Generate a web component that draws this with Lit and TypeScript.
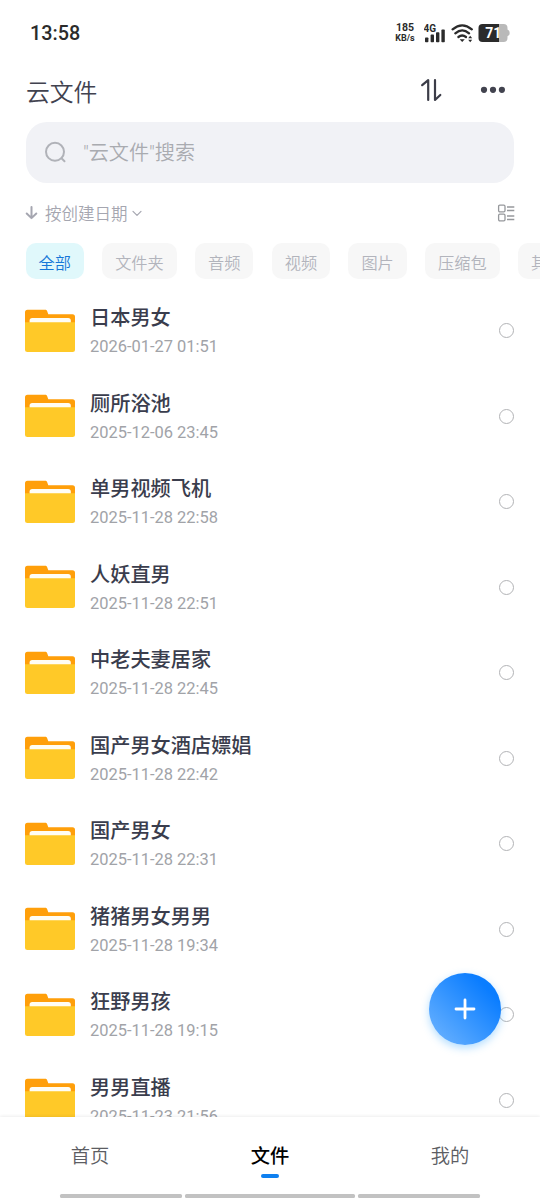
import { LitElement, html, css } from "lit";
import { customElement, property } from "lit/decorators.js";
import { classMap } from "lit/directives/class-map.js";

const FILES: [string, string][] = [
  ["日本男女", "2026-01-27 01:51"],
  ["厕所浴池", "2025-12-06 23:45"],
  ["单男视频飞机", "2025-11-28 22:58"],
  ["人妖直男", "2025-11-28 22:51"],
  ["中老夫妻居家", "2025-11-28 22:45"],
  ["国产男女酒店嫖娼", "2025-11-28 22:42"],
  ["国产男女", "2025-11-28 22:31"],
  ["猪猪男女男男", "2025-11-28 19:34"],
  ["狂野男孩", "2025-11-28 19:15"],
  ["男男直播", "2025-11-23 21:56"],
];

const FILTERS = ["全部", "文件夹", "音频", "视频", "图片", "压缩包", "其他"];

@customElement("status-bar")
class StatusBar extends LitElement {
  static styles = css`
    :host {
      display: flex;
      align-items: center;
      height: 66px;
      box-sizing: border-box;
      padding: 0 29px 0 30px;
      color: #2b2b2b;
      font-family: Roboto, sans-serif;
    }
    .time { flex: 1; font-size: 19.8px; font-weight: 550; line-height: 24px; padding-top: 2px; }
    .speed {
      width: 22px;
      text-align: center;
      font-size: 10.5px;
      line-height: 10px;
      font-weight: 700;
      margin-right: 8px;
    }
    .unit { font-size: 9px; }
    svg { display: block; }
  `;
  render() {
    return html`
      <span class="time">13:58</span>
      <div class="speed">185<div class="unit">KB/s</div></div>
      <svg width="87" height="24" viewBox="0 0 87 24" fill="#2b2b2b">
        <text x="-0.5" y="10.6" font-size="10" font-weight="700" font-family="Roboto, sans-serif">4G</text>
        <rect x="1" y="16.4" width="3.4" height="4.8" rx="0.8" />
        <rect x="6.6" y="13.6" width="3.4" height="7.6" rx="0.8" />
        <rect x="12" y="11.2" width="3.4" height="10" rx="0.8" />
        <rect x="17.4" y="8.6" width="3.4" height="12.6" rx="0.8" />
        <g fill="none" stroke="#2b2b2b" stroke-width="2.3" stroke-linecap="round">
          <path d="M28.6 8.3 Q38.2 0.4 47.8 8.3" />
          <path d="M31.3 12.3 Q38.2 6.4 45.1 12.3" />
          <path d="M34.4 16 Q38.2 13 42 16" />
        </g>
        <path d="M35.6 18.3h5.2L38.2 21.1z" />
        <path d="M44.2 17.3l2-2.5 2 2.5zM44.2 18.7h4l-2 2.5z" />
        <path d="M58.5 2.9H75V21H58.5a4 4 0 0 1-4-4V6.900a4 4 0 0 1 4-4z" />
        <path d="M75 2.900h4.500a4 4 0 0 1 4 4v1.600q2.200.6 2.200 3.400t-2.200 3.400v1.700a4 4 0 0 1-4 4H75z" fill="#b9b9b9" />
        <text x="61.200" y="17" font-size="14" font-weight="700" fill="#fff" font-family="Roboto, sans-serif">71</text>
      </svg>
    `;
  }
}

@customElement("file-row")
class FileRow extends LitElement {
  @property() name = "";
  @property() date = "";
  static styles = css`
    :host {
      display: flex;
      flex: none;
      align-items: center;
      height: 85.5px;
      padding: 0 26px 0 25px;
    }
    .folder { display: block; flex: none; margin-right: 15px; }
    .info { flex: 1; }
    .name { font-size: 20.2px; line-height: 28px; font-weight: 500; color: #3a3d4d; }
    .date { font-family: Roboto, sans-serif; font-size: 16.45px; line-height: 22px; margin-top: 5px; color: #a1a3a8; }
    .check {
      width: 15px;
      height: 15px;
      box-sizing: border-box;
      border: 1px solid #b2b3b6;
      border-radius: 50%;
    }
  `;
  render() {
    return html`
      <svg class="folder" width="50" height="44" viewBox="0 0 50 44">
        <path d="M2.500 .7h17.600c1 0 1.700.5 2 1.300l1.200 3.200H47.500a2.500 2.500 0 0 1 2.500 2.500V24H0V3.200A2.500 2.500 0 0 1 2.500 .7z" fill="#ff9f0a" />
        <path d="M4.600 17v-5.400a2.600 2.600 0 0 1 2.600-2.600h36a2.600 2.600 0 0 1 2.600 2.600V17z" fill="#fffdf4" />
        <path d="M0 13.200h50v27.300a2.500 2.500 0 0 1-2.500 2.500h-45a2.500 2.500 0 0 1-2.500-2.500z" fill="#ffc928" />
      </svg>
      <div class="info">
        <div class="name">${this.name}</div>
        <div class="date">${this.date}</div>
      </div>
      <span class="check"></span>
    `;
  }
}

@customElement("app-root")
class AppRoot extends LitElement {
  static styles = css`
    :host {
      display: flex;
      flex-direction: column;
      position: relative;
      width: 540px;
      height: 1200px;
      overflow: hidden;
      background: #fff;
      font-family: "Noto Sans CJK SC", sans-serif;
    }
    svg { display: block; flex: none; }
    .header {
      display: flex;
      align-items: center;
      height: 49px;
      padding: 0 35px 1px 26px;
      color: #41424f;
    }
    .title { flex: 1; font-size: 23.8px; line-height: 36px; font-weight: 350; }
    .search {
      display: flex;
      align-items: center;
      gap: 16px;
      height: 60.5px;
      margin: 6px 26px 0;
      padding: 0 0 1px 19px;
      box-sizing: border-box;
      border-radius: 21px;
      background: #f1f2f6;
      color: #a9abb0;
      font-family: Roboto, "Noto Sans CJK SC", sans-serif;
      font-size: 20.1px;
      font-weight: 350;
    }
    .sort {
      display: flex;
      align-items: center;
      height: 24px;
      margin-top: 18.5px;
      padding: 0 25px;
      color: #a5a6b0;
      font-size: 16.5px;
      font-weight: 350;
    }
    .label { margin: 0 4px 0 7px; }
    .spacer { flex: 1; }
    .chips {
      display: flex;
      flex: none;
      gap: 18.3px;
      margin: 18px 0 0 25.5px;
      overflow: hidden;
    }
    .chip {
      flex: none;
      height: 36px;
      line-height: 38px;
      padding: 0 13px;
      border-radius: 10px;
      background: #f7f7f7;
      color: #b2b4bc;
      font-size: 16.2px;
      font-weight: 350;
    }
    .chip.active { background: #e0f8fb; color: #1677d8; }
    .list {
      display: flex;
      flex-direction: column;
      flex: 1;
      min-height: 0;
      padding-top: 9px;
      overflow: hidden;
    }
    .fab {
      position: absolute;
      left: 429px;
      top: 973px;
      width: 72px;
      height: 72px;
      display: grid;
      place-items: center;
      border-radius: 50%;
      background: linear-gradient(45deg, #6ab2ff 5%, #0a7dff 80%);
      box-shadow: 0 3px 8px rgba(60, 170, 255, 0.4);
    }
    .nav {
      display: grid;
      grid-template-columns: repeat(3, 1fr);
      flex: none;
      height: 77px;
      background: #fff;
      box-shadow: 0 -1px 3px rgba(0, 0, 0, 0.07);
      z-index: 1;
    }
    .tab {
      display: flex;
      flex-direction: column;
      align-items: center;
      padding-top: 24px;
      font-size: 19.3px;
      line-height: 28px;
      font-weight: 350;
      color: #5c5d63;
    }
    .tab.active { color: #000; font-weight: 500; }
    .tab.active::after {
      content: "";
      width: 18px;
      height: 4px;
      margin-top: 5px;
      border-radius: 2px;
      background: #0e80f0;
    }
    .gesture {
      display: grid;
      grid-template-columns: 122px 170px 122px;
      gap: 3px;
      flex: none;
      padding: 0 60px 2px;
      background: #fff;
      z-index: 1;
    }
    .bar { height: 4px; border-radius: 1.5px; background: #c2c2c2; }
  `;
  render() {
    return html`
      <status-bar></status-bar>
      <div class="header">
        <span class="title">云文件</span>
        <svg width="22" height="24" viewBox="0 0 22 24" fill="none" stroke="#3c3d48" stroke-width="2.2" stroke-linecap="round" stroke-linejoin="round">
          <path d="M1.200 6.200L7.200 1.200V21" />
          <path d="M14 1.200V21l5.300-5" />
        </svg>
        <svg width="62" height="24" viewBox="0 0 62 24" fill="#42434f">
          <circle cx="41" cy="10.800" r="3.100" /><circle cx="50" cy="10.800" r="3.100" /><circle cx="58.900" cy="10.800" r="3.100" />
        </svg>
      </div>
      <div class="search">
        <svg width="22" height="22" viewBox="0 0 22 22" fill="none" stroke="#b0b2b8" stroke-width="2" stroke-linecap="round">
          <circle cx="10" cy="10.800" r="9" /><path d="M16.500 17.300l3 3" />
        </svg>
        <span>"云文件"搜索</span>
      </div>
      <div class="sort">
        <svg width="13" height="16" viewBox="0 0 13 16" fill="none" stroke="#a5a6b0" stroke-width="2" stroke-linecap="round" stroke-linejoin="round">
          <path d="M6.500 2V13M1.700 8.500L6.500 13.100l4.800-4.600" />
        </svg>
        <span class="label">按创建日期</span>
        <svg width="10" height="8" viewBox="0 0 10 8" fill="none" stroke="#a5a6b0" stroke-width="1.200" stroke-linecap="round" stroke-linejoin="round">
          <path d="M1 2.300l4 4 4-4" />
        </svg>
        <span class="spacer"></span>
        <svg width="18" height="18" viewBox="0 0 18 18" fill="none" stroke="#96989c" stroke-width="1.300">
          <rect x="1.600" y="1.200" width="6.400" height="6.600" rx="1.200" />
          <rect x="1.600" y="10.200" width="6.400" height="6.600" rx="1.200" />
          <path d="M10 3h7.300M10 6.500h7.300M10 12h7.300M10 15.500h7.300" />
        </svg>
      </div>
      <div class="chips">
        ${FILTERS.map((f, i) => html`<span class=${classMap({ chip: true, active: i === 0 })}>${f}</span>`)}
      </div>
      <div class="list">
        ${FILES.map(([n, d]) => html`<file-row .name=${n} .date=${d}></file-row>`)}
      </div>
      <div class="nav">
        ${["首页", "文件", "我的"].map((t, i) => html`<div class=${classMap({ tab: true, active: i === 1 })}>${t}</div>`)}
      </div>
      <div class="gesture"><i class="bar"></i><i class="bar"></i><i class="bar"></i></div>
      <div class="fab">
        <svg width="22" height="22" viewBox="0 0 22 22" stroke="#fff" stroke-width="2.800" stroke-linecap="round">
          <path d="M11 2v18M2 11h18" />
        </svg>
      </div>
    `;
  }
}
